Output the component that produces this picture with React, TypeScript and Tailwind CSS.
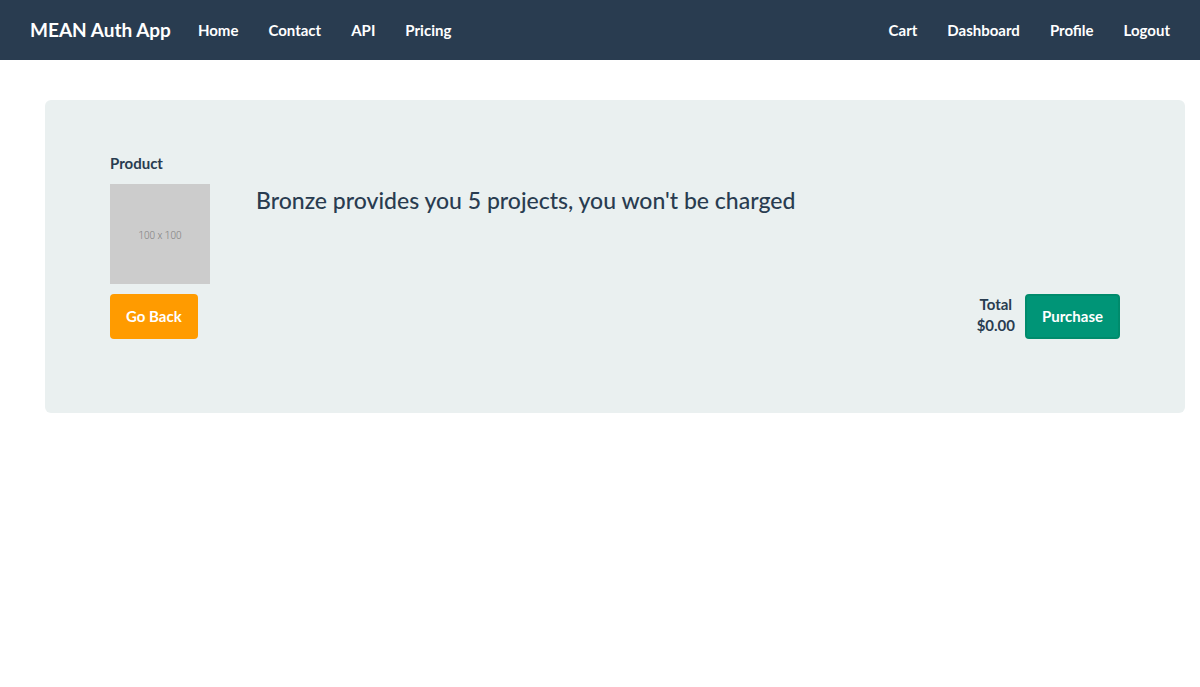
const leftLinks = ["Home", "Contact", "API", "Pricing"];
const rightLinks = ["Cart", "Dashboard", "Profile", "Logout"];

function NavList({ items }: { items: string[] }) {
  return (
    <ul className="flex">
      {items.map((item) => (
        <li key={item}>
          <a href="#" className="block px-[15px] py-5 leading-5 text-white hover:text-[#18bc9c]">
            {item}
          </a>
        </li>
      ))}
    </ul>
  );
}

export default function App() {
  return (
    <div className="font-['Lato',sans-serif] text-[15px] leading-[21px] text-[#293c50]">
      <nav className="flex items-center bg-[#293c50] px-[15px] font-bold">
        <a href="#" className="py-5 pr-3 pl-[15px] text-[19px] leading-5 text-white">
          MEAN Auth App
        </a>
        <NavList items={leftLinks} />
        <div className="ml-auto">
          <NavList items={rightLinks} />
        </div>
      </nav>
      <main className="mt-10 mr-[15px] ml-[45px] rounded-md bg-[#eaf0f0] px-[65px] pt-[53px] pb-[74px]">
        <table className="w-full">
          <thead>
            <tr>
              <th className="pb-[10px] text-left" colSpan={2}>
                Product
              </th>
            </tr>
          </thead>
          <tbody>
            <tr>
              <td className="w-[146px]">
                <div className="flex size-[100px] items-center justify-center bg-[#cccccc] pt-[2px] font-['Roboto',sans-serif] text-[10px] font-light text-[#808080]">
                  100 x 100
                </div>
              </td>
              <td className="align-top">
                <h4 className="pt-1 text-[23px] leading-6 font-medium">
                  Bronze provides you 5 projects, you won't be charged
                </h4>
              </td>
            </tr>
          </tbody>
        </table>
        <div className="mt-[10px] flex items-start">
          <button className="rounded bg-[#ff9b00] px-4 py-3 font-bold text-white">Go Back</button>
          <div className="mr-[10px] ml-auto text-center font-bold">
            <div>Total</div>
            <div>$0.00</div>
          </div>
          <button className="rounded border-2 border-[#008b6c] bg-[#009577] px-[15px] py-[10px] font-bold text-white">
            Purchase
          </button>
        </div>
      </main>
    </div>
  );
}
